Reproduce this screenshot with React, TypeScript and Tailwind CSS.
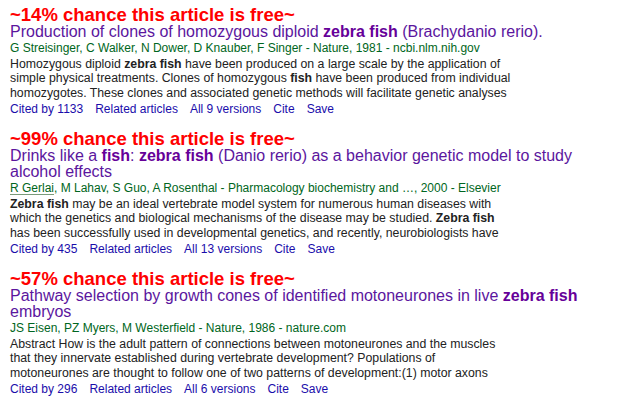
import type { ReactNode } from 'react';

type Result = {
  chance: number;
  title: ReactNode[];
  authors: ReactNode;
  snippet: ReactNode[];
  cited: number;
  versions: number;
};

const results: Result[] = [
  {
    chance: 14,
    title: [
      <>
        Production of clones of homozygous diploid <b>zebra fish</b> (Brachydanio rerio).
      </>,
    ],
    authors: <>G Streisinger, C Walker, N Dower, D Knauber, F Singer - Nature, 1981 - ncbi.nlm.nih.gov</>,
    snippet: [
      <>
        Homozygous diploid <b>zebra fish</b> have been produced on a large scale by the application of
      </>,
      <>
        simple physical treatments. Clones of homozygous <b>fish</b> have been produced from individual
      </>,
      <>homozygotes. These clones and associated genetic methods will facilitate genetic analyses</>,
    ],
    cited: 1133,
    versions: 9,
  },
  {
    chance: 99,
    title: [
      <>
        Drinks like a <b>fish</b>: <b>zebra fish</b> (Danio rerio) as a behavior genetic model to study
      </>,
      <>alcohol effects</>,
    ],
    authors: (
      <>
        <span className="underline underline-offset-2 decoration-[#7a9a7a]">R Gerlai</span>, M Lahav, S Guo, A
        Rosenthal - Pharmacology biochemistry and …, 2000 - Elsevier
      </>
    ),
    snippet: [
      <>
        <b>Zebra fish</b> may be an ideal vertebrate model system for numerous human diseases with
      </>,
      <>
        which the genetics and biological mechanisms of the disease may be studied. <b>Zebra fish</b>
      </>,
      <>has been successfully used in developmental genetics, and recently, neurobiologists have</>,
    ],
    cited: 435,
    versions: 13,
  },
  {
    chance: 57,
    title: [
      <>
        Pathway selection by growth cones of identified motoneurones in live <b>zebra fish</b>
      </>,
      <>embryos</>,
    ],
    authors: <>JS Eisen, PZ Myers, M Westerfield - Nature, 1986 - nature.com</>,
    snippet: [
      <>Abstract How is the adult pattern of connections between motoneurones and the muscles</>,
      <>that they innervate established during vertebrate development? Populations of</>,
      <>motoneurones are thought to follow one of two patterns of development:(1) motor axons</>,
    ],
    cited: 296,
    versions: 6,
  },
];

const ResultItem = ({ r }: { r: Result }) => {
  return (
    <div className="mb-[13.5px]">
      <div className="text-[18.5px] leading-[16px] font-bold text-[#ff0000] whitespace-nowrap">
        ~{r.chance}% chance this article is free~
      </div>
      <div className="mt-[1px] text-[16px] leading-[16px] text-[#5b169e] whitespace-nowrap">
        {r.title.map((line, i) => (
          <div key={i} className="[&_b]:inline-block [&_b]:leading-[16px] [&_b]:text-[#660099]">
            {line}
          </div>
        ))}
      </div>
      <div className="mt-[1px] text-[12px] leading-[15px] text-[#006621] whitespace-nowrap">{r.authors}</div>
      <div className="mt-[1px] text-[12.3px] leading-[14.5px] text-[#222] whitespace-nowrap">
        {r.snippet.map((line, i) => (
          <div key={i}>{line}</div>
        ))}
      </div>
      <div className="mt-[1px] flex gap-3 text-[12px] leading-[16px] text-[#1a0dab] whitespace-nowrap">
        <a href="#">Cited by {r.cited}</a>
        <a href="#">Related articles</a>
        <a href="#">All {r.versions} versions</a>
        <a href="#">Cite</a>
        <a href="#">Save</a>
      </div>
    </div>
  );
};

export default function App() {
  return (
    <div className="w-[640px] h-[400px] overflow-hidden bg-white pl-[10px] pt-[6.5px] font-['Liberation_Sans',Arial,sans-serif]">
      {results.map((r) => (
        <ResultItem key={r.chance} r={r} />
      ))}
    </div>
  );
}
